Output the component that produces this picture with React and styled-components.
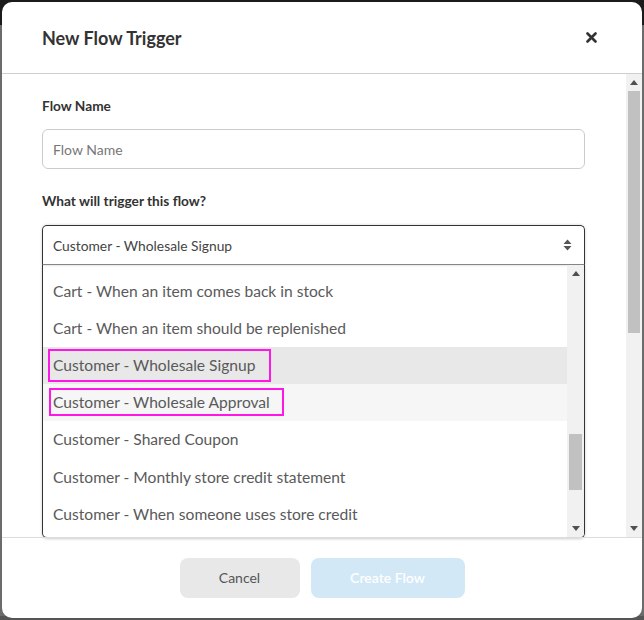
import React from 'react';
import styled, { createGlobalStyle } from 'styled-components';

const GlobalStyle = createGlobalStyle`
  html, body {
    margin: 0;
    height: 100%;
  }
  body {
    background: linear-gradient(#1b1b1b 0 25px, #6b6b6b 25px 616px, #555 616px);
    font-family: Lato, "Open Sans", sans-serif;
  }
`;

const Page = styled.div`
  padding: 2px;
`;

const Modal = styled.div`
  width: 640px;
  height: 616px;
  background: #fff;
  border-radius: 10px;
  display: flex;
  flex-direction: column;
  overflow: hidden;
`;

const Header = styled.div`
  height: 71px;
  flex: none;
  display: flex;
  align-items: center;
  justify-content: space-between;
  padding: 0 44px 0 40px;
  border-bottom: 1px solid #cfcfcf;
`;

const Title = styled.h2`
  margin: 0;
  font-size: 18px;
  font-weight: 700;
  color: #333;
`;

const Close = styled.button`
  border: none;
  background: none;
  padding: 0;
  width: 14px;
  height: 14px;
  display: flex;
  align-items: center;
  justify-content: center;
  cursor: pointer;
`;

const Body = styled.div`
  flex: 1;
  display: flex;
  min-height: 0;
`;

const Content = styled.div`
  flex: 1;
  padding: 22px 41px 0 40px;
`;

const Label = styled.div`
  font-size: 13.7px;
  line-height: 20px;
  font-weight: 700;
  color: #333;
  margin-top: ${p => p.$top || 0}px;
`;

const Input = styled.input`
  display: block;
  box-sizing: border-box;
  width: 100%;
  height: 40px;
  margin-top: 13px;
  padding: 0 10px;
  border: 1px solid #ccc;
  border-radius: 6px;
  font-family: inherit;
  font-size: 14px;
  color: #333;
  outline: none;
  &::placeholder {
    color: #777;
  }
`;

const Select = styled.div`
  margin-top: 14px;
  box-sizing: border-box;
  height: 40px;
  display: flex;
  align-items: center;
  justify-content: space-between;
  padding: 0 12px 0 10px;
  border: 1px solid #333;
  border-bottom-color: #8a8a8a;
  border-radius: 5px 5px 0 0;
  font-size: 13.8px;
  color: #444;
  box-shadow: 0 0 3px rgba(0, 0, 0, 0.2);
`;

const List = styled.div`
  box-sizing: border-box;
  height: 273px;
  display: flex;
  border: 1px solid #333;
  border-top: none;
  border-radius: 0 0 5px 5px;
  overflow: hidden;
  box-shadow: 0 1px 3px rgba(0, 0, 0, 0.2);
`;

const Options = styled.div`
  flex: 1;
  padding-top: 7.5px;
`;

const Option = styled.div`
  height: 37.1px;
  display: flex;
  align-items: center;
  padding-left: 10px;
  font-size: 15.6px;
  color: #5a5a5a;
  background: ${p => p.$bg || '#fff'};
`;

const Mark = styled.span`
  margin-left: ${p => p.$shift}px;
  padding: ${p => p.$pad};
  border: 2px solid #ff17e8;
`;

const Scrollbar = styled.div`
  flex: none;
  width: ${p => p.$w}px;
  background: #f1f1f1;
  display: flex;
  flex-direction: column;
  align-items: center;
`;

const Arrow = styled.div`
  height: 17px;
  flex: none;
  display: flex;
  align-items: center;
  justify-content: center;
`;

const Track = styled.div`
  flex: 1;
  width: 100%;
  padding: 0 2px;
  box-sizing: border-box;
`;

const Thumb = styled.div`
  background: #c1c1c1;
  margin-top: ${p => p.$top}px;
  height: ${p => p.$h}px;
`;

const Footer = styled.div`
  flex: none;
  height: 81px;
  border-top: 1px solid #dcdcdc;
  display: flex;
  justify-content: center;
  align-items: center;
  gap: 11px;
  padding-bottom: 1px;
  box-sizing: border-box;
`;

const Button = styled.button`
  height: 40px;
  width: ${p => p.$w}px;
  border: none;
  border-radius: 8px;
  font-family: inherit;
  font-size: 14px;
  font-weight: ${p => (p.$primary ? 600 : 400)};
  color: ${p => (p.$primary ? '#fff' : '#555')};
  background: ${p => (p.$primary ? '#d2e8f7' : '#e8e8e8')};
`;

const Tri = ({ down }) => (
  <svg width="8" height="5" viewBox="0 0 8 5">
    <path d={down ? 'M0 0H8L4 5Z' : 'M0 5H8L4 0Z'} fill="#505050" />
  </svg>
);

const options = [
  { text: 'Cart - When an item comes back in stock' },
  { text: 'Cart - When an item should be replenished' },
  { text: 'Customer - Wholesale Signup', bg: '#e8e8e8', pad: '5px 14px 6px 3px', shift: -5 },
  { text: 'Customer - Wholesale Approval', bg: '#f6f6f6', pad: '3px 12px 3px 2px', shift: -4 },
  { text: 'Customer - Shared Coupon' },
  { text: 'Customer - Monthly store credit statement' },
  { text: 'Customer - When someone uses store credit' },
];

const App = () => (
  <Page>
    <GlobalStyle />
    <Modal>
      <Header>
        <Title>New Flow Trigger</Title>
        <Close aria-label="Close">
          <svg width="11" height="11" viewBox="0 0 11 11">
            <path d="M1.5 1.5L9.5 9.5M9.5 1.5L1.5 9.5" stroke="#333" strokeWidth="2.6" strokeLinecap="round" />
          </svg>
        </Close>
      </Header>
      <Body>
        <Content>
          <Label>Flow Name</Label>
          <Input placeholder="Flow Name" />
          <Label $top={22}>What will trigger this flow?</Label>
          <Select>
            <span>Customer - Wholesale Signup</span>
            <svg width="9" height="12" viewBox="0 0 9 12">
              <path d="M0.5 5H8.5L4.5 0.5Z M0.5 7H8.5L4.5 11.5Z" fill="#555" />
            </svg>
          </Select>
          <List>
            <Options>
              {options.map(o => (
                <Option key={o.text} $bg={o.bg}>
                  {o.pad ? <Mark $pad={o.pad} $shift={o.shift}>{o.text}</Mark> : o.text}
                </Option>
              ))}
            </Options>
            <Scrollbar $w={17}>
              <Arrow><Tri /></Arrow>
              <Track><Thumb $top={152} $h={56} /></Track>
              <Arrow><Tri down /></Arrow>
            </Scrollbar>
          </List>
        </Content>
        <Scrollbar $w={16}>
          <Arrow><Tri /></Arrow>
          <Track><Thumb $top={0} $h={242} /></Track>
          <Arrow><Tri down /></Arrow>
        </Scrollbar>
      </Body>
      <Footer>
        <Button $w={120}>Cancel</Button>
        <Button $w={154} $primary>Create Flow</Button>
      </Footer>
    </Modal>
  </Page>
);

export default App;
